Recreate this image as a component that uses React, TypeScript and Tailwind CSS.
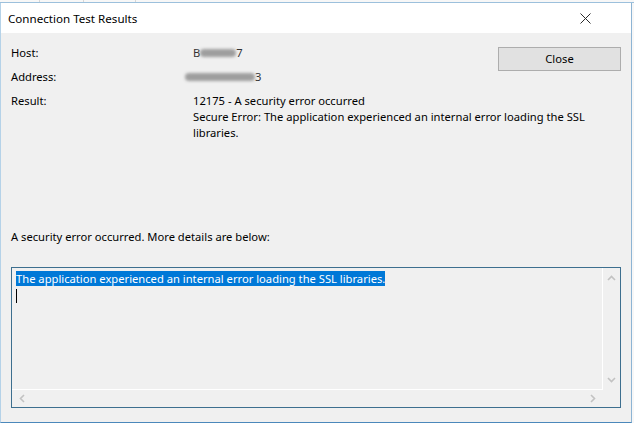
import React from "react";

const font = { fontFamily: '"Noto Sans", "Liberation Sans", sans-serif' };

const Smudge: React.FC<{ lead: string; tail: string; w: string }> = ({ lead, tail, w }) => (
  <span className="flex h-[16px] items-center text-[#333]">
    <span>{lead}</span>
    <span className={`inline-block h-[8px] ${w} rounded-sm bg-[#8a8a8a] blur-[1.5px] opacity-80`} />
    <span>{tail}</span>
  </span>
);

const Arrow: React.FC<{ d: string }> = ({ d }) => (
  <svg width="9" height="9" viewBox="0 0 9 9" className="text-[#c2c2c2]">
    <path d={d} fill="none" stroke="currentColor" strokeWidth="1.6" />
  </svg>
);

export default function App() {
  return (
    <div
      className="w-[634px] h-[423px] overflow-hidden bg-[#f7f7f7] text-[11.2px] leading-[16px] text-black flex flex-col"
      style={font}
    >
      {/* strip of whatever sits behind the dialog */}
      <div className="h-[3px] flex border-b border-[#9cc0dc]">
        <div className="w-[40px] border-r border-[#d6d6d6]" />
        <div className="w-[44px] border-r border-[#d6d6d6]" />
        <div className="w-[52px] border-r border-[#d6d6d6]" />
      </div>

      <div className="flex-1 flex flex-col w-[632px] border-l border-r border-b border-l-[#b5d2e8] border-r-[#8db4d4] border-b-[#4b88bb]">
        {/* title bar */}
        <div className="h-[30px] bg-white flex items-center justify-between pl-[7px] pr-[40px]">
          <span className="pt-[1px] text-[11.6px]">Connection Test Results</span>
          <svg width="11" height="11" viewBox="0 0 11 11">
            <path d="M0.5 0.5 L10.5 10.5 M10.5 0.5 L0.5 10.5" stroke="#2b2b2b" strokeWidth="1" />
          </svg>
        </div>

        {/* body */}
        <div className="flex-1 bg-[#f0f0f0] flex flex-col px-[10px]">
          <div className="h-[196px] flex pt-[12px]">
            <div className="flex-1 min-w-0 grid grid-cols-[182px_auto] gap-y-[8px] content-start whitespace-nowrap">
              <span className="h-[16px]">Host:</span>
              <Smudge lead="B" tail="7" w="w-[36px]" />
              <span className="h-[16px]">Address:</span>
              <span className="-ml-[8px]">
                <Smudge lead="" tail="3" w="w-[70px]" />
              </span>
              <span>Result:</span>
              <span>
                12175 - A security error occurred
                <br />
                Secure Error: The application experienced an internal error loading the SSL
                <br />
                libraries.
              </span>
            </div>
            <button className="shrink-0 mt-[2px] w-[123px] h-[24px] bg-[#e1e1e1] border border-[#adadad] text-black">
              Close
            </button>
          </div>

          <div>A security error occurred. More details are below:</div>

          <div className="mt-[22px] h-[141px] border border-[#3d6f8f] bg-[#f0f0f0] grid grid-cols-[1fr_17px] grid-rows-[1fr_17px]">
            <div className="border-r border-b border-white pl-[4px] pt-[3px]">
              <span className="bg-[#0078d7] text-white">
                The application experienced an internal error loading the SSL libraries.
              </span>
              <div className="mt-[2px] w-[1px] h-[14px] bg-black" />
            </div>
            <div className="flex flex-col items-center justify-between py-[6px]">
              <Arrow d="M1 6 L4.5 2.5 L8 6" />
              <Arrow d="M1 3 L4.5 6.5 L8 3" />
            </div>
            <div className="flex items-center justify-between px-[6px]">
              <Arrow d="M6 1 L2.5 4.5 L6 8" />
              <Arrow d="M3 1 L6.5 4.5 L3 8" />
            </div>
            <div />
          </div>
        </div>
      </div>
    </div>
  );
}
